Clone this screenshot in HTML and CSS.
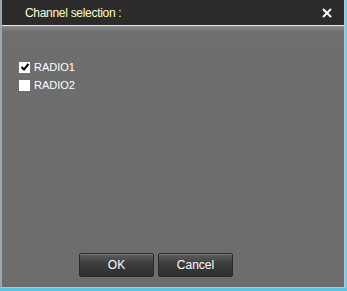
FILE: index.html
```html
<!DOCTYPE html>
<html>
<head lang="en">
    <meta charset="UTF-8">
    <title>Channel selection</title>
    <link rel="stylesheet" href="styles.css">
</head>
<body>
<div class="frame">
    <div class="titlebar">
        <span class="title">Channel selection :</span>
        <span class="close">
            <svg width="10" height="10" viewBox="0 0 10 10">
                <path d="M1 1 L9 9 M9 1 L1 9" stroke="#fff" stroke-width="2"/>
            </svg>
        </span>
    </div>
    <div class="content">
        <ul class="channels">
            <li>
                <span class="check checked">
                    <svg width="10" height="10" viewBox="0 0 10 10">
                        <path d="M1.5 5 L4 7.5 L8.5 2" stroke="#000" stroke-width="2" fill="none"/>
                    </svg>
                </span>
                RADIO1
            </li>
            <li>
                <span class="check"></span>
                RADIO2
            </li>
        </ul>
        <div class="buttons">
            <button class="btn">OK</button>
            <button class="btn">Cancel</button>
        </div>
    </div>
</div>
</body>
</html>
```

FILE: styles.css
```css
* {
    margin: 0;
    padding: 0;
}

html, body {
    width: 347px;
    height: 291px;
    overflow: hidden;
    background-color: #5ec3e0;
}

.frame {
    height: 287px;
    border-left: 2px solid #9aa6b2;
    border-right: 2px solid #b8c4cc;
    border-bottom: 1px solid #b8c4cc;
    margin-right: 1px;
    display: flex;
    flex-direction: column;
    font-family: "Liberation Sans", Arial, sans-serif;
    font-size: 11px;
}

.titlebar {
    height: 25px;
    background-color: #2b2b2b;
    border-bottom: 1px solid #e8e8e8;
    display: flex;
    align-items: center;
    justify-content: space-between;
    padding: 0 12px 0 23px;
}

.title {
    color: #ffffcc;
    font-size: 12px;
    letter-spacing: -0.3px;
}

.close {
    display: flex;
}

.content {
    flex: 1;
    background: linear-gradient(#8a8a8a, #6e6e6e 6px, #6d6d6d);
    display: flex;
    flex-direction: column;
    padding: 32px 0 10px 17px;
}

.channels {
    list-style: none;
    flex: 1;
}

.channels li {
    display: flex;
    align-items: center;
    height: 18px;
    color: #fff;
    gap: 4px;
}

.check {
    width: 11px;
    height: 11px;
    background-color: #fff;
    display: flex;
    align-items: center;
    justify-content: center;
}

.buttons {
    display: flex;
    gap: 4px;
    padding-left: 60px;
}

.btn {
    width: 75px;
    height: 24px;
    border: 1px solid #2a2a2a;
    border-radius: 2px;
    background: linear-gradient(#5e5e5e, #3c3c3c 45%, #2e2e2e);
    color: #fff;
    font-family: "Liberation Sans", Arial, sans-serif;
    font-size: 12px;
    box-shadow: inset 0 1px 0 #777;
}
```
